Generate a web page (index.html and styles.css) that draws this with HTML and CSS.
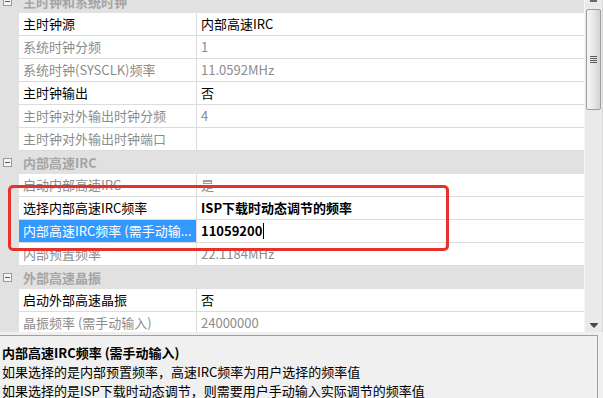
FILE: index.html
```html
<!DOCTYPE html>
<html lang="zh-CN">
<head>
<meta charset="utf-8">
<title>属性</title>
<link rel="stylesheet" href="styles.css">
</head>
<body>
<div class="window">
  <div class="grid-area">
    <div class="grid">
      <div class="rows">
        <div class="group"><span class="toggle"></span><span class="group-title">主时钟和系统时钟</span></div>
        <div class="row"><div class="margin"></div><div class="name">主时钟源</div><div class="value">内部高速IRC</div></div>
        <div class="row off"><div class="margin"></div><div class="name">系统时钟分频</div><div class="value">1</div></div>
        <div class="row off"><div class="margin"></div><div class="name">系统时钟(SYSCLK)频率</div><div class="value">11.0592MHz</div></div>
        <div class="row"><div class="margin"></div><div class="name">主时钟输出</div><div class="value">否</div></div>
        <div class="row off"><div class="margin"></div><div class="name">主时钟对外输出时钟分频</div><div class="value">4</div></div>
        <div class="row off"><div class="margin"></div><div class="name">主时钟对外输出时钟端口</div><div class="value"></div></div>
        <div class="group"><span class="toggle"></span><span class="group-title">内部高速IRC</span></div>
        <div class="row off"><div class="margin"></div><div class="name">启动内部高速IRC</div><div class="value">是</div></div>
        <div class="row"><div class="margin"></div><div class="name">选择内部高速IRC频率</div><div class="value bold">ISP下载时动态调节的频率</div></div>
        <div class="row selected"><div class="margin"></div><div class="name">内部高速IRC频率 (需手动输...</div><div class="value bold">11059200<span class="caret"></span></div></div>
        <div class="row off"><div class="margin"></div><div class="name">内部预置频率</div><div class="value">22.1184MHz</div></div>
        <div class="group"><span class="toggle"></span><span class="group-title">外部高速晶振</span></div>
        <div class="row"><div class="margin"></div><div class="name">启动外部高速晶振</div><div class="value">否</div></div>
        <div class="row off"><div class="margin"></div><div class="name">晶振频率 (需手动输入)</div><div class="value">24000000</div></div>
      </div>
    </div>
    <div class="vscroll">
      <div class="arrow-top"></div>
      <div class="thumb">
        <div class="grip"><span></span><span></span><span></span><span></span></div>
      </div>
      <div class="track"></div>
      <div class="arrow-bottom">
        <svg width="8" height="5" viewBox="0 0 8 5"><path d="M0 0.5H8M1 1.5L4 4.5L7 1.5Z" stroke="#4a4a4a" stroke-width="1" fill="#4a4a4a"/></svg>
      </div>
    </div>
  </div>
  <div class="desc">
    <div class="desc-title">内部高速IRC频率 (需手动输入)</div>
    <div class="desc-line">如果选择的是内部预置频率，高速IRC频率为用户选择的频率值</div>
    <div class="desc-line">如果选择的是ISP下载时动态调节，则需要用户手动输入实际调节的频率值</div>
  </div>
  <div class="highlight"></div>
</div>
</body>
</html>
```
FILE: styles.css
```css
html, body {
  margin: 0;
  padding: 0;
}
body {
  background: #f0f0f0;
  font-family: "Noto Sans CJK SC", "Noto Sans", sans-serif;
  font-size: 13px;
  color: #000;
  width: 603px;
  height: 398px;
  overflow: hidden;
}
.window {
  position: relative;
  width: 603px;
  height: 398px;
}
.grid-area {
  display: flex;
  height: 332px;
}
.grid {
  width: 584px;
  background: #fff;
  overflow: hidden;
}
.rows {
  margin-top: -10px;
}
.group {
  display: flex;
  align-items: center;
  height: 23px;
  background: #e1e1e1;
}
.toggle {
  position: relative;
  width: 7px;
  height: 7px;
  margin-left: 3px;
  border: 1px solid #9a9a9a;
  background: #f4f4f4;
}
.toggle::after {
  content: "";
  position: absolute;
  left: 1px;
  top: 3px;
  width: 5px;
  height: 1px;
  background: #5a5a5a;
}
.group-title {
  margin-left: 11px;
  font-weight: bold;
  color: #a5a5a5;
  line-height: 22px;
}
.row {
  display: grid;
  grid-template-columns: 19px 178px 1fr;
  height: 23px;
}
.margin {
  background: #e1e1e1;
}
.name, .value {
  border-bottom: 1px solid #dcdcdc;
  padding-left: 4px;
  line-height: 22px;
  white-space: nowrap;
  overflow: hidden;
}
.name {
  border-right: 1px solid #dcdcdc;
}
.row.off .name, .row.off .value {
  color: #8c8c8c;
}
.row.selected .name {
  background: #3399ff;
  color: #fff;
}
.value.bold {
  font-weight: bold;
}
.caret {
  display: inline-block;
  width: 1px;
  height: 16px;
  background: #000;
  vertical-align: -3px;
  margin-left: 1px;
}
.vscroll {
  flex: 1;
  display: flex;
  flex-direction: column;
  background: #eaeaea;
  border-left: 1px solid #f6f6f6;
  border-right: 1px solid #dadada;
  padding-left: 1px;
  padding-right: 1px;
}
.arrow-top {
  height: 2px;
  margin: 0 4px 7px 4px;
  background: #6a6a6a;
}
.thumb {
  height: 99px;
  border: 1px solid #9c9c9c;
  border-radius: 2px;
  background: linear-gradient(to right, #f6f6f6, #e6e6e6 55%, #d2d2d2);
  display: flex;
  align-items: center;
  justify-content: center;
}
.grip {
  display: flex;
  flex-direction: column;
  gap: 1px;
}
.grip span {
  display: block;
  width: 7px;
  height: 1px;
  background: #5c5c5c;
}
.track {
  flex: 1;
}
.arrow-bottom {
  height: 15px;
  display: flex;
  justify-content: center;
  padding-top: 6px;
  box-sizing: border-box;
}
.arrow-bottom svg {
  display: block;
}
.desc {
  margin-top: 3px;
  width: 598px;
  height: 63px;
  border-top: 1px solid #a0a0a0;
  border-right: 1px solid #a0a0a0;
  background: #f0f0f0;
  padding: 7px 0 0 2px;
  box-sizing: border-box;
  line-height: 19px;
  white-space: nowrap;
  overflow: hidden;
}
.desc-title {
  font-weight: bold;
}
.highlight {
  position: absolute;
  left: 8px;
  top: 185px;
  width: 441px;
  height: 66px;
  box-sizing: border-box;
  border: 3px solid #e8312b;
  border-radius: 5px;
}
```
